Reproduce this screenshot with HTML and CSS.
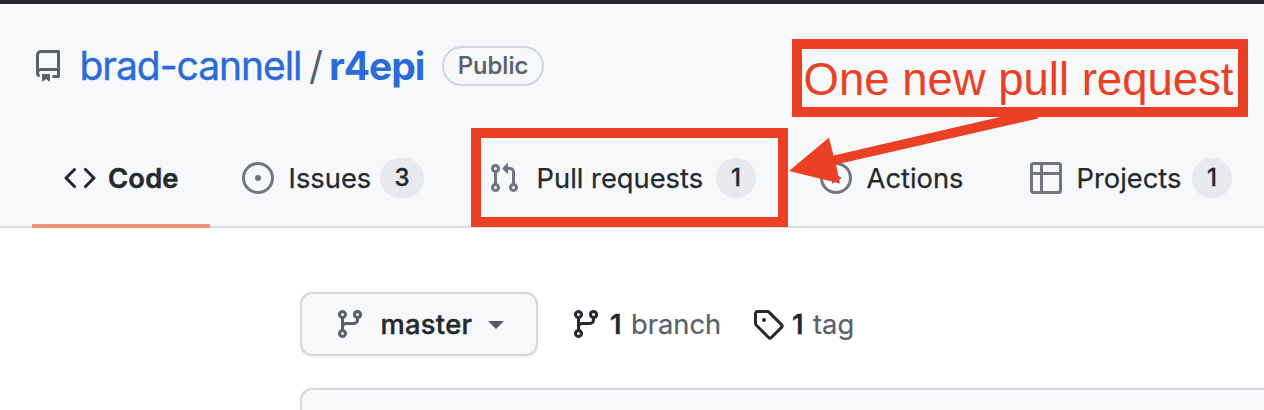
FILE: index.html
```html
<!DOCTYPE html>
<html lang="en">
<head>
<meta charset="utf-8">
<title>brad-cannell/r4epi</title>
<link rel="stylesheet" href="styles.css">
</head>
<body>
<svg class="defs" width="0" height="0">
  <symbol id="branch" viewBox="0 0 16 16"><path fill-rule="evenodd" d="M11.75 2.5a.75.75 0 100 1.5.75.75 0 000-1.5zm-2.25.75a2.25 2.25 0 113 2.122V6A2.5 2.5 0 0110 8.5H6a1 1 0 00-1 1v1.128a2.251 2.251 0 11-1.5 0V5.372a2.25 2.25 0 111.5 0v1.836A2.492 2.492 0 016 7h4a1 1 0 001-1v-.628A2.25 2.25 0 019.5 3.25zM4.25 12a.75.75 0 100 1.5.75.75 0 000-1.5zM3.5 3.25a.75.75 0 111.5 0 .75.75 0 01-1.5 0z"/></symbol>
</svg>
<header class="header">
  <div class="title">
    <svg class="icon repo-icon" viewBox="0 0 16 16"><path fill-rule="evenodd" d="M2 2.5A2.5 2.5 0 014.5 0h8.75a.75.75 0 01.75.75v12.5a.75.75 0 01-.75.75h-2.5a.75.75 0 110-1.5h1.75v-2h-8a1 1 0 00-.714 1.7.75.75 0 01-1.072 1.05A2.495 2.495 0 012 11.5v-9zm10.5-1V9h-8c-.356 0-.694.074-1 .208V2.5a1 1 0 011-1h8zM5 12.25v3.25a.25.25 0 00.4.2l1.45-1.087a.25.25 0 01.3 0L8.6 15.7a.25.25 0 00.4-.2v-3.25a.25.25 0 00-.25-.25h-3.5a.25.25 0 00-.25.25z"/></svg>
    <a class="owner">brad-cannell</a>
    <span class="slash">/</span>
    <a class="repo">r4epi</a>
    <span class="visibility">Public</span>
  </div>
  <nav class="tabs">
    <a class="tab tab-code">
      <svg class="icon" viewBox="0 0 16 16"><path fill-rule="evenodd" d="M4.72 3.22a.75.75 0 011.06 1.06L2.06 8l3.72 3.72a.75.75 0 11-1.06 1.06L.47 8.53a.75.75 0 010-1.06l4.25-4.25zm6.56 0a.75.75 0 10-1.06 1.06L13.94 8l-3.72 3.72a.75.75 0 101.06 1.06l4.25-4.25a.75.75 0 000-1.06l-4.25-4.25z"/></svg>
      <span class="label">Code</span>
    </a>
    <a class="tab tab-issues">
      <svg class="icon" viewBox="0 0 16 16"><path d="M8 9.5a1.5 1.5 0 100-3 1.5 1.5 0 000 3z"/><path fill-rule="evenodd" d="M8 0a8 8 0 100 16A8 8 0 008 0zM1.5 8a6.5 6.5 0 1113 0 6.5 6.5 0 01-13 0z"/></svg>
      <span class="label">Issues</span><span class="count count-wide">3</span>
    </a>
    <a class="tab tab-pulls">
      <svg class="icon" viewBox="0 0 16 16"><path fill-rule="evenodd" d="M7.177 3.073L9.573.677A.25.25 0 0110 .854v4.792a.25.25 0 01-.427.177L7.177 3.427a.25.25 0 010-.354zM3.75 2.5a.75.75 0 100 1.5.75.75 0 000-1.5zm-2.25.75a2.25 2.25 0 113 2.122v5.256a2.251 2.251 0 11-1.5 0V5.372A2.25 2.25 0 011.5 3.25zM11 2.5h-1V4h1a1 1 0 011 1v5.628a2.251 2.251 0 101.5 0V5A2.5 2.5 0 0011 2.5zm1 10.25a.75.75 0 111.5 0 .75.75 0 01-1.5 0zM3.75 12a.75.75 0 100 1.5.75.75 0 000-1.5z"/></svg>
      <span class="label">Pull requests</span><span class="count">1</span>
    </a>
    <a class="tab tab-actions">
      <svg class="icon" viewBox="0 0 16 16"><path fill-rule="evenodd" d="M1.5 8a6.5 6.5 0 1113 0 6.5 6.5 0 01-13 0zM8 0a8 8 0 100 16A8 8 0 008 0zM6.379 5.227A.25.25 0 006 5.442v5.117a.25.25 0 00.379.214l4.264-2.559a.25.25 0 000-.428L6.379 5.227z"/></svg>
      <span class="label">Actions</span>
    </a>
    <a class="tab tab-projects">
      <svg class="icon" viewBox="0 0 16 16"><path fill-rule="evenodd" d="M1.75 0A1.75 1.75 0 000 1.75v12.5C0 15.216.784 16 1.75 16h12.5A1.75 1.75 0 0016 14.25V1.75A1.75 1.75 0 0014.25 0H1.75zM1.5 1.75a.25.25 0 01.25-.25H5V5H1.5V1.75zM6.5 1.5h7.75a.25.25 0 01.25.25V5h-8V1.5zM1.5 6.5H5v8H1.75a.25.25 0 01-.25-.25V6.5zM6.5 6.5h8v7.75a.25.25 0 01-.25.25H6.5v-8z"/></svg>
      <span class="label">Projects</span><span class="count">1</span>
    </a>
  </nav>
</header>
<main class="content">
  <div class="toolbar">
    <button class="branch-button">
      <svg class="icon"><use href="#branch"/></svg>
      <span class="branch-name">master</span>
      <span class="caret"></span>
    </button>
    <a class="stat stat-branch">
      <svg class="icon"><use href="#branch"/></svg>
      <strong>1</strong><span class="stat-text">branch</span>
    </a>
    <a class="stat stat-tag">
      <svg class="icon" viewBox="0 0 16 16"><path fill-rule="evenodd" d="M2.5 7.775V2.75a.25.25 0 01.25-.25h5.025a.25.25 0 01.177.073l6.25 6.25a.25.25 0 010 .354l-5.025 5.025a.25.25 0 01-.354 0l-6.25-6.25a.25.25 0 01-.073-.177zm-1.5 0V2.75C1 1.784 1.784 1 2.75 1h5.025c.464 0 .91.184 1.238.513l6.25 6.25a1.75 1.75 0 010 2.474l-5.026 5.026a1.75 1.75 0 01-2.474 0l-6.25-6.25A1.75 1.75 0 011 7.775zM6 5a1 1 0 100 2 1 1 0 000-2z"/></svg>
      <strong>1</strong><span class="stat-text">tag</span>
    </a>
  </div>
  <div class="file-box"></div>
</main>
<div class="highlight"></div>
<svg class="arrow" viewBox="0 0 1264 410"><path d="M789 171L829 137.500L833.500 155.500L1000 117H1038V118.500L836 164.500L840 183.500Z"/></svg>
<div class="callout">One new pull request</div>
</body>
</html>
```
FILE: styles.css
```css
* { box-sizing: border-box; }
body {
  margin: 0;
  width: 1264px;
  height: 410px;
  overflow: hidden;
  position: relative;
  background: #fff;
  color: #24292e;
  font-family: Inter, "Liberation Sans", sans-serif;
  font-size: 27.3px;
}
.defs { position: absolute; }
.icon { width: 32px; height: 32px; flex: none; fill: currentColor; display: block; }
.header {
  height: 228px;
  background: #f6f8fa;
  border-top: 4px solid #24292e;
  border-bottom: 2px solid #d8dce1;
}
.title {
  display: flex;
  align-items: center;
  height: 126px;
  padding: 0 0 3px 32px;
  font-size: 39px;
  white-space: nowrap;
  color: #586069;
}
.repo-icon { margin-top: 1px; }
.owner { width: 221px; margin-left: 15.5px; color: #2a6bd8; letter-spacing: -1.05px; -webkit-text-stroke: .4px; }
.slash { width: 17px; margin-left: 8.5px; }
.repo { width: 97px; margin-left: 3px; color: #2a6bd8; font-weight: 700; letter-spacing: -1.1px; }
.visibility {
  width: 102px;
  height: 40px;
  margin-left: 16px;
  border: 2px solid #d1d5dc;
  border-radius: 20px;
  line-height: 36px;
  text-align: center;
  font-size: 24px;
  font-weight: 500;
  -webkit-text-stroke: .2px;
}
.tabs { display: flex; height: 98px; margin-left: 32px; }
.tab { display: flex; flex: none; align-items: center; height: 98px; padding: 0 32px 2px; white-space: nowrap; }
.tab .icon { color: #6e7681; margin-right: 14.6px; }
.tab .label { flex: 1; -webkit-text-stroke: .25px; }
.tab-code { width: 178px; border-bottom: 4px solid #f0917a; font-weight: 600; padding: 2px 32px 0; }
.tab-code .icon { color: #24292e; margin-right: 12px; }
.tab-code .label { -webkit-text-stroke: .5px; letter-spacing: .2px; }
.tab-issues { width: 246px; }
.tab-pulls { width: 332px; }
.tab-pulls .icon { margin-right: 16.6px; }
.tab-actions { width: 210px; }
.tab-projects { width: 266px; }
.count {
  width: 40px;
  height: 40px;
  border-radius: 20px;
  background: #e7eaed;
  text-align: center;
  line-height: 40px;
  font-size: 24px;
  font-weight: 500;
  -webkit-text-stroke: .3px;
}
.count-wide { width: 44px; }
.content { height: 182px; overflow: hidden; padding: 64px 0 0 300px; }
.toolbar { display: flex; align-items: center; height: 64px; }
.branch-button {
  display: flex;
  align-items: center;
  width: 238px;
  height: 64px;
  padding: 0 0 0 32px;
  border: 2px solid #d3d6da;
  border-radius: 12px;
  background: #f6f8fa;
  box-shadow: 0 2px 0 rgba(27, 31, 35, .04);
  color: #24292e;
  font: inherit;
  font-weight: 500;
}
.branch-button .icon { color: #586069; }
.branch-name { width: 91.500px; margin-left: 14.500px; text-align: left; letter-spacing: .3px; -webkit-text-stroke: .4px; }
.caret { margin-left: 16px; border: 8px solid transparent; border-top-color: #555a60; border-bottom: 0; margin-top: 2px; }
.stat { display: flex; align-items: center; white-space: nowrap; }
.stat-branch { width: 182px; margin-left: 32px; }
.stat strong { width: 17px; margin-left: 8px; font-weight: 600; -webkit-text-stroke: .3px; }
.stat-text { margin-left: 4px; color: #586069; -webkit-text-stroke: .2px; }
.file-box {
  width: 964px;
  height: 22px;
  margin-top: 32px;
  border: 2px solid #d1d7df;
  border-width: 2px 0 0 2px;
  border-radius: 12px 0 0 0;
  background: #f6f8fa;
}
.highlight { position: absolute; left: 471px; top: 128px; width: 317px; height: 99px; border: 10px solid #ec4024; }
.arrow { position: absolute; inset: 0; width: 1264px; height: 410px; fill: #ec4024; }
.callout {
  position: absolute;
  left: 792px;
  top: 39px;
  width: 456px;
  height: 78px;
  padding-left: 1.5px;
  border: 10px solid #ec4024;
  color: #ec4024;
  font-family: "Liberation Sans", sans-serif;
  font-size: 45.5px;
  line-height: 62px;
  white-space: nowrap;
}
```
